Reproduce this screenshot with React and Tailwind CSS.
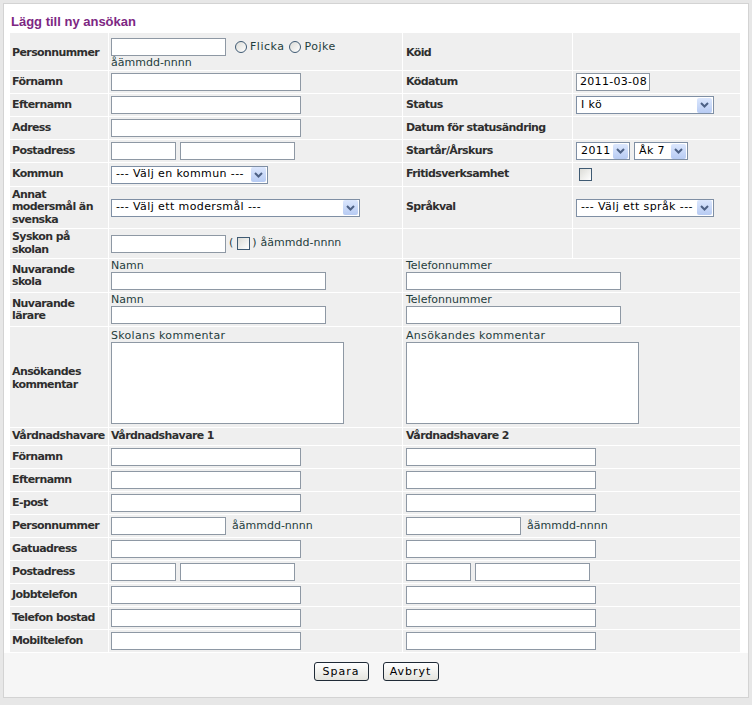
const font = { fontFamily: '"DejaVu Sans", Verdana, sans-serif' }

function Arrow() {
  return (
    <span className="flex h-[15px] w-[15px] shrink-0 items-center justify-center rounded-[2px] bg-gradient-to-b from-[#dce7fd] to-[#b7cbf3]">
      <svg width="9" height="6" viewBox="0 0 9 6">
        <path d="M1 1l3.5 3.5L8 1" stroke="#4d6185" strokeWidth="2" fill="none" />
      </svg>
    </span>
  )
}

function Select({ text, className }) {
  return (
    <div className={`flex h-[18px] items-center justify-between border border-[#7f8fa4] bg-white pl-[4px] pr-px text-[11px] tracking-[0.4px] text-black ${className}`}>
      <span className="whitespace-nowrap">{text}</span>
      <Arrow />
    </div>
  )
}

function Input({ className = 'w-[190px]', value = '' }) {
  return (
    <div className={`h-[18px] shrink-0 overflow-hidden whitespace-nowrap border border-[#8e98a4] bg-white px-[3px] text-[11px] leading-[16px] tracking-[0.3px] text-black ${className}`}>
      {value}
    </div>
  )
}

function Check() {
  return <span className="inline-block h-[13px] w-[13px] border border-[#3f5a73] bg-gradient-to-br from-[#dcdcd7] to-white" />
}

function Radio() {
  return <span className="inline-block h-[12px] w-[12px] rounded-full border border-[#3f5a73] bg-gradient-to-br from-[#dcdcd7] to-white" />
}

function Label({ children, className = '' }) {
  return (
    <div className={`flex items-center bg-[#efefef] pl-[2px] text-[11px] font-bold leading-[12.5px] tracking-[-0.6px] text-[#2e2e2e] ${className}`}>
      <div>{children}</div>
    </div>
  )
}

function Cell({ children, className = '' }) {
  return <div className={`flex items-center gap-[4px] bg-[#efefef] pl-[2px] ${className}`}>{children}</div>
}

const hint = 'text-[11px] text-[#1f3d3d]'

const guardianRows = [
  { label: 'Förnamn' },
  { label: 'Efternamn' },
  { label: 'E-post' },
  { label: 'Personnummer', pnr: true },
  { label: 'Gatuadress' },
  { label: 'Postadress', post: true },
  { label: 'Jobbtelefon' },
  { label: 'Telefon bostad' },
  { label: 'Mobiltelefon' },
]

function GuardianField({ row }) {
  if (row.pnr) {
    return (
      <>
        <Input className="w-[115px]" />
        <span className={`${hint} pl-[2px]`}>åämmdd-nnnn</span>
      </>
    )
  }
  if (row.post) {
    return (
      <>
        <Input className="w-[65px]" />
        <Input className="w-[115px]" />
      </>
    )
  }
  return <Input />
}

function GuardianRow({ row }) {
  return (
    <>
      <Label>{row.label}</Label>
      <Cell><GuardianField row={row} /></Cell>
      <Cell className="col-span-2 pl-[3px]"><GuardianField row={row} /></Cell>
    </>
  )
}

export default function App() {
  return (
    <div className="h-[705px] w-[752px] bg-[#e7e7e7] p-[3px]" style={font}>
      <div className="flex h-[695px] w-[746px] flex-col border border-[#d3d3d3] bg-white">
        <div className="h-[29px] pl-[7px] pt-[10px]">
          <h1 className="text-[13px] font-bold leading-[16px] text-[#7d2783]" style={{ fontFamily: '"Liberation Sans", Arial, sans-serif' }}>
            Lägg till ny ansökan
          </h1>
        </div>

        <div className="ml-[6px] grid w-[730px] grid-cols-[98px_293px_169px_167px] grid-rows-[37px_22px_22px_22px_22px_23px_41px_29px_33px_33px_100px_17px_22px_22px_22px_22px_22px_22px_22px_22px_22px] gap-px bg-white">
          {/* Row 1 */}
          <Label className="pt-[4px]">Personnummer</Label>
          <div className="flex flex-col bg-[#efefef] pl-[2px] pt-[5px]">
            <div className="flex items-start">
              <Input className="w-[115px]" />
              <span className="ml-[9px] mt-px flex items-center gap-[3px] text-[11px] tracking-[0.5px] text-[#1f3d3d]">
                <Radio /> Flicka
              </span>
              <span className="ml-[5px] mt-px flex items-center gap-[3px] text-[11px] tracking-[0.5px] text-[#1f3d3d]">
                <Radio /> Pojke
              </span>
            </div>
            <span className={`${hint} leading-[13px]`}>åämmdd-nnnn</span>
          </div>
          <Label className="pl-[3px] pt-[4px]">Köid</Label>
          <Cell />

          {/* Row 2 */}
          <Label>Förnamn</Label>
          <Cell><Input /></Cell>
          <Label className="pl-[3px]">Ködatum</Label>
          <Cell className="pl-[3px]"><Input className="w-[74px]" value="2011-03-08" /></Cell>

          {/* Row 3 */}
          <Label>Efternamn</Label>
          <Cell><Input /></Cell>
          <Label className="pl-[3px]">Status</Label>
          <Cell className="pl-[3px]"><Select text="I kö" className="w-[138px]" /></Cell>

          {/* Row 4 */}
          <Label>Adress</Label>
          <Cell><Input /></Cell>
          <Label className="pl-[3px]">Datum för statusändring</Label>
          <Cell />

          {/* Row 5 */}
          <Label>Postadress</Label>
          <Cell>
            <Input className="w-[65px]" />
            <Input className="w-[115px]" />
          </Cell>
          <Label className="pl-[3px]">Startår/Årskurs</Label>
          <Cell className="pl-[3px]">
            <Select text="2011" className="w-[54px]" />
            <Select text="Åk 7" className="w-[54px]" />
          </Cell>

          {/* Row 6 */}
          <Label>Kommun</Label>
          <Cell><Select text="--- Välj en kommun ---" className="w-[157px]" /></Cell>
          <Label className="pl-[3px]">Fritidsverksamhet</Label>
          <Cell className="pl-[6px]"><Check /></Cell>

          {/* Row 7 */}
          <Label>Annat<br />modersmål än<br />svenska</Label>
          <Cell><Select text="--- Välj ett modersmål ---" className="w-[249px]" /></Cell>
          <Label className="pl-[3px]">Språkval</Label>
          <Cell className="pl-[3px]"><Select text="--- Välj ett språk ---" className="w-[138px]" /></Cell>

          {/* Row 8 */}
          <Label>Syskon på<br />skolan</Label>
          <div className="flex items-center bg-[#efefef] pl-[2px]">
            <Input className="w-[115px]" />
            <span className={`${hint} ml-[3px]`}>(</span>
            <span className="ml-[4px] flex"><Check /></span>
            <span className={`${hint} ml-[2px]`}>)</span>
            <span className={`${hint} ml-[4px]`}>åämmdd-nnnn</span>
          </div>
          <Cell />
          <Cell />

          {/* Row 9 */}
          <Label className="pt-px">Nuvarande<br />skola</Label>
          <div className="flex flex-col bg-[#efefef] pl-[2px] pt-[1px]">
            <span className={`${hint} leading-[12px]`}>Namn</span>
            <Input className="w-[215px]" />
          </div>
          <div className="col-span-2 flex flex-col bg-[#efefef] pl-[3px] pt-[1px]">
            <span className={`${hint} leading-[12px]`}>Telefonnummer</span>
            <Input className="w-[215px]" />
          </div>

          {/* Row 10 */}
          <Label className="pt-px">Nuvarande<br />lärare</Label>
          <div className="flex flex-col bg-[#efefef] pl-[2px] pt-[1px]">
            <span className={`${hint} leading-[12px]`}>Namn</span>
            <Input className="w-[215px]" />
          </div>
          <div className="col-span-2 flex flex-col bg-[#efefef] pl-[3px] pt-[1px]">
            <span className={`${hint} leading-[12px]`}>Telefonnummer</span>
            <Input className="w-[215px]" />
          </div>

          {/* Row 11 */}
          <Label className="pt-[3px]">Ansökandes<br />kommentar</Label>
          <div className="flex flex-col bg-[#efefef] pl-[2px] pt-[2px]">
            <span className={`${hint} leading-[13px] tracking-[0.3px]`}>Skolans kommentar</span>
            <div className="h-[82px] w-[233px] border border-[#8e98a4] bg-white" />
          </div>
          <div className="col-span-2 flex flex-col bg-[#efefef] pl-[3px] pt-[2px]">
            <span className={`${hint} leading-[13px] tracking-[0.3px]`}>Ansökandes kommentar</span>
            <div className="h-[82px] w-[233px] border border-[#8e98a4] bg-white" />
          </div>

          {/* Guardians header */}
          <Label>Vårdnadshavare</Label>
          <Label>Vårdnadshavare 1</Label>
          <Label className="col-span-2 pl-[3px]">Vårdnadshavare 2</Label>

          {guardianRows.map(row => (
            <GuardianRow key={row.label} row={row} />
          ))}
        </div>

        <div className="mt-px flex flex-1 justify-center gap-[14px] bg-[#f6f6f6] pt-[9px]">
          <button className="h-[19px] w-[55px] rounded-[3px] border border-[#1f2a36] bg-gradient-to-b from-white to-[#e4e4de] text-[11px] leading-[16px] tracking-[1px] text-black">
            Spara
          </button>
          <button className="h-[19px] w-[56px] rounded-[3px] border border-[#1f2a36] bg-gradient-to-b from-white to-[#e4e4de] text-[11px] leading-[16px] tracking-[1px] text-black">
            Avbryt
          </button>
        </div>
      </div>
    </div>
  )
}
